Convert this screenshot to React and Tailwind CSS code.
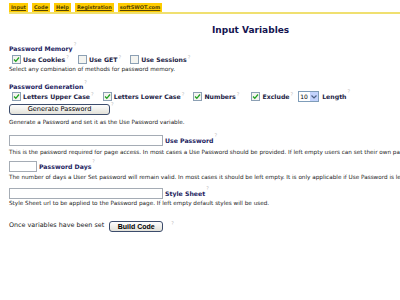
import React from 'react';

const Q = () => (
  <sup className="ml-[1px] text-[5px] leading-none text-[#bdbdbd] font-normal align-[3px]">?</sup>
);

const Box = ({ checked }) => (
  <span className="inline-flex w-[9px] h-[9px] border border-[#8ca0b4] bg-[#f4f4f0] items-center justify-center mr-[2px] shrink-0">
    {checked && (
      <svg width="7" height="7" viewBox="0 0 7 7">
        <path d="M1 3.5 L2.8 5.3 L6 1.5" stroke="#21a121" strokeWidth="1.3" fill="none" />
      </svg>
    )}
  </span>
);

const Check = ({ label, checked = true }) => (
  <label className="inline-flex items-center h-[9px] text-[6.2px] font-bold text-[#222244] whitespace-nowrap">
    <Box checked={checked} />
    {label}
    <Q />
  </label>
);

const Heading = ({ children, className = '' }) => (
  <div className={`h-[7px] text-[6.2px] font-bold text-[#1c1c60] leading-[7px] ${className}`}>
    {children}
    <Q />
  </div>
);

const Desc = ({ children, className = '' }) => (
  <div className={`h-[6px] text-[5.7px] text-[#222] whitespace-nowrap leading-[6px] ${className}`}>{children}</div>
);

const XpButton = ({ children, className = '' }) => (
  <button className={`border border-[#3c4c6c] rounded-[3px] bg-gradient-to-b from-[#fefefe] to-[#e2e1d9] text-black leading-none ${className}`}>
    {children}
  </button>
);

const Field = ({ w }) => (
  <div className={`h-[11px] border border-[#a5acb5] bg-white shrink-0 ${w}`}></div>
);

const Label = ({ children }) => (
  <span className="ml-[2px] text-[6.2px] font-bold text-[#1c1c60] whitespace-nowrap">
    {children}
    <Q />
  </span>
);

export default function App() {
  const tabs = ['Input', 'Code', 'Help', 'Registration', 'softSWOT.com'];
  return (
    <div className="w-[400px] h-[300px] bg-white overflow-hidden font-['DejaVu_Sans',Verdana,sans-serif]">
      {/* nav */}
      <div className="pl-[9px] pt-[3px]">
        <div className="flex gap-[4px] border-b-2 border-[#f0e070]">
          {tabs.map((t) => (
            <span key={t} className="bg-[#ffcc00] px-[2px] h-[9px] flex items-center text-[5px] font-bold underline text-[#554400]">
              {t}
            </span>
          ))}
        </div>
      </div>

      <div className="pl-[212px] pt-[12px] h-[30px] text-[9px] font-bold text-[#141450] leading-[9px]">Input Variables</div>

      <div className="pl-[9px] flex flex-col">
        <Heading>Password Memory</Heading>
        <div className="flex gap-[9px] pl-[3px] mt-[4px]">
          <Check label="Use Cookies" />
          <Check label="Use GET" checked={false} />
          <Check label="Use Sessions" checked={false} />
        </div>
        <Desc className="mt-[2px]">Select any combination of methods for password memory.</Desc>

        <Heading className="mt-[10px]">Password Generation</Heading>
        <div className="flex items-center h-[11px] gap-[9px] pl-[3px] mt-[2px]">
          <Check label="Letters Upper Case" />
          <Check label="Letters Lower Case" />
          <Check label="Numbers" />
          <div className="flex items-center ml-[3px]">
            <Check label="Exclude" />
            <div className="ml-[5px] flex h-[11px] w-[21px] border border-[#7f9db9] bg-white">
              <span className="flex-1 text-[6px] leading-[9px] pl-[1px] text-black">10</span>
              <span className="w-[8px] bg-[#c3d3fd] flex items-center justify-center">
                <svg width="6" height="4" viewBox="0 0 6 4"><path d="M0.5 0.5 L3 3 L5.5 0.5" stroke="#4d6185" strokeWidth="1.2" fill="none" /></svg>
              </span>
            </div>
            <span className="ml-[3px] text-[6.2px] font-bold text-[#222244]">Length<Q /></span>
          </div>
        </div>
        <div className="flex items-start mt-[2px]">
          <XpButton className="w-[101px] h-[11px] text-[6.6px]">Generate Password</XpButton>
          <Q />
        </div>
        <Desc className="mt-[4px]">Generate a Password and set it as the Use Password variable.</Desc>

        <div className="flex items-center mt-[10px]">
          <Field w="w-[154px]" />
          <Label>Use Password</Label>
        </div>
        <Desc className="mt-[3px]">This is the password required for page access. In most cases a Use Password should be provided. If left empty users can set their own password.</Desc>

        <div className="flex items-center mt-[6px]">
          <Field w="w-[28px]" />
          <Label>Password Days</Label>
        </div>
        <Desc className="mt-[2px]">The number of days a User Set password will remain valid. In most cases it should be left empty. It is only applicable if Use Password is left empty.</Desc>

        <div className="flex items-center mt-[8px]">
          <Field w="w-[154px]" />
          <Label>Style Sheet</Label>
        </div>
        <Desc className="mt-[1px]">Style Sheet url to be applied to the Password page. If left empty default styles will be used.</Desc>

        <div className="flex items-center mt-[9px]">
          <span className="text-[6.4px] text-[#222] whitespace-nowrap">Once variables have been set</span>
          <XpButton className="ml-[5px] w-[54px] h-[11px] text-[7px] font-bold font-['Liberation_Sans',Arial,sans-serif]">Build Code</XpButton>
          <span className="self-start ml-[7px] -mt-[2px]"><Q /></span>
        </div>
      </div>
    </div>
  );
}
